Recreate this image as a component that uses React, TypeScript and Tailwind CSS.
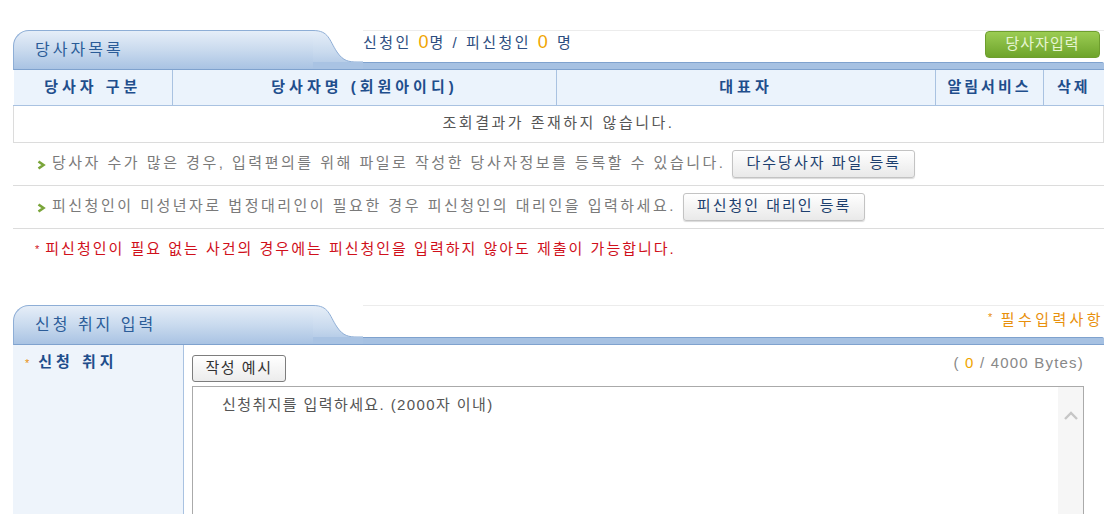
import type { ReactNode } from "react";

const FONT = "font-['Liberation_Sans','Noto_Sans_CJK_KR',sans-serif]";

function SectionHeader({ title, children }: { title: string; children?: ReactNode }) {
  return (
    <div className="flex h-[40px] items-stretch">
      <div className="w-[300px] rounded-tl-[16px] border-b border-l border-t border-[#8eaed6] border-b-[#7fa2ce] bg-gradient-to-b from-[#e6eef8] via-[#c9daee] to-[#a9c3e3] pl-[21px] pt-[7px]">
        <span className="text-[16px] tracking-[3px] text-[#2b5c98]">{title}</span>
      </div>
      <svg width="50" height="40" viewBox="0 0 50 40" className="shrink-0">
        <defs>
          <linearGradient id="tabfill" x1="0" y1="0" x2="0" y2="1">
            <stop offset="0" stopColor="#e6eef8" />
            <stop offset="0.55" stopColor="#c9daee" />
            <stop offset="1" stopColor="#a9c3e3" />
          </linearGradient>
        </defs>
        <path d="M0 0.5 C16 0.5 16 10 24 22 C30 31 36 32 44 32 L50 32 L50 40 L0 40 Z" fill="url(#tabfill)" />
        <path d="M0 0.5 C16 0.5 16 10 24 22 C30 31 36 32 44 32 L50 32" fill="none" stroke="#8eaed6" strokeWidth="1" />
        <rect x="0" y="32" width="50" height="8" fill="#a9c3e3" />
        <line x1="0" y1="39.5" x2="50" y2="39.5" stroke="#7fa2ce" />
      </svg>
      <div className="flex flex-1 flex-col">
        <div className="flex h-[32px] items-start border-t border-[#ececec]">{children}</div>
        <div className="h-[8px] rounded-tr-[2px] border-b border-t border-[#7fa2ce] bg-[#a6c1e2]" />
      </div>
    </div>
  );
}

function GrayButton({ children }: { children: ReactNode }) {
  return (
    <button className="ml-[7px] h-[28px] rounded-[3px] border border-[#c3c3c3] bg-gradient-to-b from-white to-[#e9e9e9] px-[13px] text-[15px] tracking-[2px] text-[#1d3f6e] shadow-[0_1px_1px_rgba(0,0,0,0.15)]">
      {children}
    </button>
  );
}

function InfoRow({ text, action }: { text: string; action: string }) {
  return (
    <div className="flex h-[43px] items-center border-b border-[#dcdcdc] pl-[24px]">
      <svg width="9" height="10" viewBox="0 0 9 10" className="mr-[6px] mt-[2px]">
        <path d="M1.5 1.5 L6.5 5 L1.5 8.5" fill="none" stroke="#7aa53a" strokeWidth="2.6" />
      </svg>
      <span className="text-[15px] tracking-[2.5px] text-[#7a7a7a]">{text}</span>
      <GrayButton>{action}</GrayButton>
    </div>
  );
}

export default function App() {
  return (
    <div className={`${FONT} min-h-[514px] bg-white pt-[30px]`}>
      <div className="ml-[13px] w-[1091px]">
        <SectionHeader title="당사자목록">
          <div className="flex w-full items-start justify-between">
            <div className="pt-[1px] text-[15px] tracking-[2.5px] text-[#2c4d80]">
              신청인 <span className="text-[18px] leading-[20px] tracking-[1px] text-[#f0a500]">0</span>명 / 피신청인{" "}
              <span className="text-[18px] leading-[20px] text-[#f0a500]">0</span> 명
            </div>
            <button className="mr-[4px] h-[27px] w-[115px] rounded-[4px] border border-[#6e9e2e] bg-gradient-to-b from-[#9bcc52] to-[#6ea42b] text-[15px] tracking-[1px] text-[#e6f5d2]">
              당사자입력
            </button>
          </div>
        </SectionHeader>

        <table className="w-full border-collapse text-[15px]">
          <thead>
            <tr className="h-[35px] bg-[#ebf3fc] text-[#1f4e8c]">
              <th className="w-[159px] border-b border-r border-[#a9c2e1] font-bold tracking-[4px]">당사자 구분</th>
              <th className="w-[384px] border-b border-r border-[#a9c2e1] font-bold tracking-[4px]">당사자명 (회원아이디)</th>
              <th className="w-[379px] border-b border-r border-[#a9c2e1] font-bold tracking-[4px]">대표자</th>
              <th className="w-[108px] border-b border-r border-[#a9c2e1] font-bold tracking-[3px]">알림서비스</th>
              <th className="border-b border-[#a9c2e1] font-bold tracking-[3px]">삭제</th>
            </tr>
          </thead>
          <tbody>
            <tr className="h-[37px]">
              <td colSpan={5} className="border border-t-0 border-[#dcdcdc] text-center tracking-[2.5px] text-[#555]">
                조회결과가 존재하지 않습니다.
              </td>
            </tr>
          </tbody>
        </table>

        <InfoRow
          text="당사자 수가 많은 경우, 입력편의를 위해 파일로 작성한 당사자정보를 등록할 수 있습니다."
          action="다수당사자 파일 등록"
        />
        <InfoRow
          text="피신청인이 미성년자로 법정대리인이 필요한 경우 피신청인의 대리인을 입력하세요."
          action="피신청인 대리인 등록"
        />
        <div className="flex h-[42px] items-center pl-[22px] text-[15px] tracking-[2px] text-[#d0101b]">
          <span className="mr-[4px] text-[11px]">*</span>피신청인이 필요 없는 사건의 경우에는 피신청인을 입력하지 않아도 제출이 가능합니다.
        </div>

        <div className="h-[34px]" />

        <SectionHeader title="신청 취지 입력">
          <div className="-mr-[3px] flex w-full justify-end pt-[3px] text-[15px] tracking-[3.4px] text-[#e8900c]">
            <span className="mr-[5px] text-[11px]">*</span>필수입력사항
          </div>
        </SectionHeader>

        <div className="flex h-[171px]">
          <div className="w-[171px] shrink-0 border-r border-[#a9c2e1] bg-[#eef4fb] pl-[12px] pt-[5px]">
            <span className="mr-[9px] text-[11px] text-[#e8900c]">*</span>
            <span className="text-[15px] font-bold tracking-[4px] text-[#1f4e8c]">신청 취지</span>
          </div>
          <div className="flex flex-1 flex-col pl-[8px] pr-[20px] pt-[10px]">
            <div className="flex items-start justify-between">
              <button className="h-[27px] w-[94px] rounded-[3px] border border-[#7d7d7d] bg-gradient-to-b from-white to-[#ececec] text-[15px] tracking-[1.5px] text-[#333]">
                작성 예시
              </button>
              <span className="-mt-[3px] text-[15px] tracking-[1.2px] text-[#888]">
                ( <span className="text-[#f0a500]">0</span> / 4000 Bytes)
              </span>
            </div>
            <div className="mt-[4px] flex flex-1 border border-[#aaa]">
              <div className="flex-1 pl-[29px] pt-[7px] text-[15px] tracking-[1.4px] text-[#555]">
                신청취지를 입력하세요. (2000자 이내)
              </div>
              <div className="flex w-[25px] justify-center bg-[#f6f6f6] pt-[24px]">
                <svg width="16" height="10" viewBox="0 0 16 10">
                  <path d="M2 8 L8 2 L14 8" fill="none" stroke="#c6c6c6" strokeWidth="2.4" />
                </svg>
              </div>
            </div>
          </div>
        </div>
      </div>
    </div>
  );
}
